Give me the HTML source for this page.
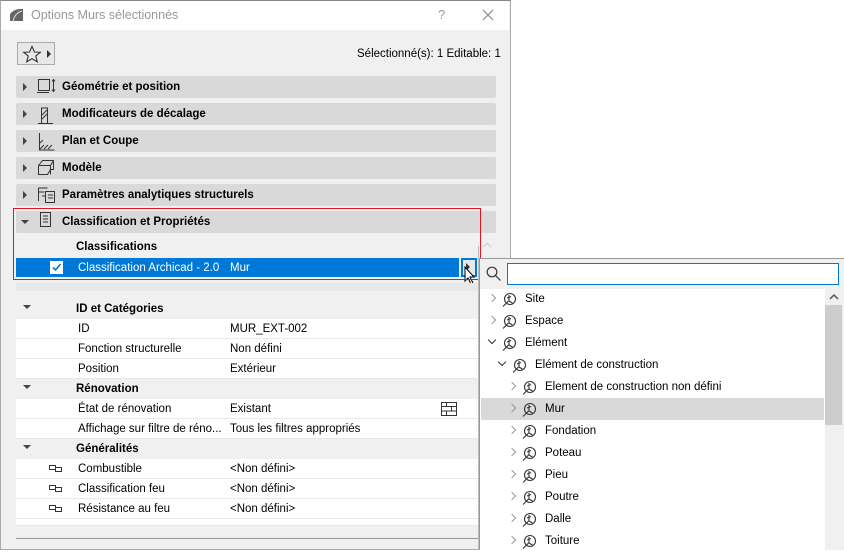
<!DOCTYPE html>
<html><head><meta charset="utf-8"><style>
*{box-sizing:border-box;margin:0;padding:0}
body{width:844px;height:550px;overflow:hidden;background:#fff;font-family:"Liberation Sans",sans-serif;font-size:11.5px;color:#000;position:relative}
.a{position:absolute}
.dlg{left:0;top:0;width:511px;height:550px;background:#f0f0f0;border:1px solid #aaa;border-top:1px solid #888}
.title{left:1px;top:1px;width:508px;height:29px;background:#fff}
.hdr{left:16px;width:480px;height:22px;background:#d9d9d9;border-radius:2px;font-weight:bold}
.hdr span{position:absolute;left:46px;top:5px}
.tri{position:absolute;left:7px;top:7px;width:0;height:0;border-top:4px solid transparent;border-bottom:4px solid transparent;border-left:4px solid #444}
.trid{position:absolute;width:0;height:0;border-left:4px solid transparent;border-right:4px solid transparent;border-top:4px solid #444}
.row{left:16px;width:462px;height:20px;background:#fff;border-bottom:1px solid #e8e8e8}
.grp{left:16px;width:462px;height:20px;background:#f0f0f0;font-weight:bold}
.row span,.grp span{position:absolute;top:4px}
.it{left:481px;width:343px;height:22px}
.it span{position:absolute;top:5px;font-size:11.5px}
.ch{position:absolute;top:7px;width:6px;height:6px;border-right:1.5px solid #999;border-bottom:1.5px solid #999;transform:rotate(-45deg)}
.chd{position:absolute;top:5px;width:6px;height:6px;border-right:1.5px solid #333;border-bottom:1.5px solid #333;transform:rotate(45deg)}
</style></head><body>
<div class="a dlg"></div>
<div class="a title"></div>
<svg class="a" style="left:9px;top:8px" width="15" height="14"><path d="M1 13 L1 6 Q6 0 14 1 L14 13 Z" fill="#666"/><path d="M4 13 Q6 5 13 3" stroke="#ddd" fill="none"/></svg>
<div class="a" style="left:31px;top:8px;font-size:12.5px;color:#999">Options Murs sélectionnés</div>
<div class="a" style="left:438px;top:7px;font-size:13px;color:#999">?</div>
<svg class="a" style="left:482px;top:9px" width="12" height="12"><path d="M1 1L11 11M11 1L1 11" stroke="#888" stroke-width="1.2"/></svg>
<div class="a" style="left:17px;top:42px;width:38px;height:23px;border:1px solid #aaa;background:#e8e8e8"></div>
<svg class="a" style="left:22px;top:45px" width="20" height="18"><path d="M10 1.5 L12.4 7 L18.3 7.3 L13.8 11 L15.3 16.8 L10 13.6 L4.7 16.8 L6.2 11 L1.7 7.3 L7.6 7 Z" fill="none" stroke="#333" stroke-width="1.1"/></svg>
<div class="a" style="left:47px;top:50px;border-top:4px solid transparent;border-bottom:4px solid transparent;border-left:4px solid #333"></div>
<div class="a" style="left:357px;top:48px">Sélectionné(s): 1 Editable: 1</div>

<div class="a hdr" style="top:76px"><div class="tri"></div><span>Géométrie et position</span></div>
<div class="a hdr" style="top:103px"><div class="tri"></div><span>Modificateurs de décalage</span></div>
<div class="a hdr" style="top:130px"><div class="tri"></div><span>Plan et Coupe</span></div>
<div class="a hdr" style="top:157px"><div class="tri"></div><span>Modèle</span></div>
<div class="a hdr" style="top:184px"><div class="tri"></div><span>Paramètres analytiques structurels</span></div>
<div class="a hdr" style="top:211px"><div class="trid" style="left:5px;top:9px"></div><span>Classification et Propriétés</span></div>
<svg class="a" style="left:36px;top:77px" width="20" height="160" fill="none" stroke="#333" stroke-width="1">
<rect x="2.5" y="2.5" width="11" height="11"/><path d="M1 15.5h12M17.5 3v11M16 4.5l1.5-2 1.5 2M16 12.5l1.5 2 1.5-2"/>
<path d="M2 46.5h15M5.5 46V31h6v15M6 42l5-5M6 38l5-5"/>
<path d="M3.5 56v17h15M4 72l4-4M8 72l4-4M12 72l4-4M4 66l3-3"/>
<path d="M2.5 88.5l4-5h11v9h-3l-3 5h-9zM2.5 88.5h12v9M14.5 88.5l3-5"/>
<path d="M2.5 124v-13h9M2.5 115h6M6 119h4M9.5 114.5h9v11h-9zM12 118h5M12 121h5"/>
<rect x="4.5" y="135.5" width="10" height="14"/><path d="M7 139h5M7 142h5M7 145h5"/>
</svg>
<div class="a" style="left:76px;top:241px;font-weight:bold">Classifications</div>
<svg class="a" style="left:482px;top:241px" width="10" height="8"><path d="M1 6l4-4 4 4" stroke="#ccc" fill="none"/></svg>
<div class="a" style="left:16px;top:258px;width:443px;height:19px;background:#0078d7"></div>
<div class="a" style="left:50px;top:261px;width:13px;height:13px;background:#fff;border:1px solid #fff"></div>
<svg class="a" style="left:51px;top:262px" width="11" height="11"><path d="M2 5.5l2.5 2.5 5-6" stroke="#0078d7" stroke-width="1.6" fill="none"/></svg>
<div class="a" style="left:78px;top:262px;color:#fff">Classification Archicad - 2.0</div>
<div class="a" style="left:230px;top:262px;color:#fff">Mur</div>
<div class="a" style="left:461px;top:258px;width:16px;height:19px;border:2px solid #0078d7;background:#e8e8e8"></div>
<div class="a" style="left:466px;top:263px;border-top:4px solid transparent;border-bottom:4px solid transparent;border-left:4px solid #333"></div>
<svg class="a" style="left:464px;top:266px" width="14" height="20"><path d="M1 1v14l3-3 3 6 2-1-3-6h4z" fill="#fff" stroke="#000"/></svg>
<div class="a" style="left:13px;top:208px;width:468px;height:72px;border:1.5px solid #e8141e"></div>
<div class="a" style="left:16px;top:283px;width:462px;height:8px;background:#e8e8e8"></div>

<div class="a grp" style="top:299px"><div class="trid" style="left:7px;top:6px"></div><span style="left:60px">ID et Catégories</span></div>
<div class="a row" style="top:319px"><span style="left:62px">ID</span><span style="left:214px">MUR_EXT-002</span></div>
<div class="a row" style="top:339px"><span style="left:62px">Fonction structurelle</span><span style="left:214px">Non défini</span></div>
<div class="a row" style="top:359px"><span style="left:62px">Position</span><span style="left:214px">Extérieur</span></div>
<div class="a grp" style="top:379px"><div class="trid" style="left:7px;top:6px"></div><span style="left:60px">Rénovation</span></div>
<div class="a row" style="top:399px"><span style="left:62px">État de rénovation</span><span style="left:214px">Existant</span></div>
<svg class="a" style="left:441px;top:402px" width="16" height="14" fill="none" stroke="#333"><path d="M.5 .5h15v13H.5zM.5 4.5h15M.5 9h15M5.5.5v4M10.5 4.5v4.5M5.5 9v4.5"/></svg>
<div class="a row" style="top:419px"><span style="left:62px">Affichage sur filtre de réno...</span><span style="left:214px">Tous les filtres appropriés</span></div>
<div class="a grp" style="top:439px"><div class="trid" style="left:7px;top:6px"></div><span style="left:60px">Généralités</span></div>
<div class="a row" style="top:459px"><span style="left:62px">Combustible</span><span style="left:214px">&lt;Non défini&gt;</span></div>
<div class="a row" style="top:479px"><span style="left:62px">Classification feu</span><span style="left:214px">&lt;Non défini&gt;</span></div>
<div class="a row" style="top:499px"><span style="left:62px">Résistance au feu</span><span style="left:214px">&lt;Non défini&gt;</span></div>
<div class="a row" style="top:519px;height:7px;overflow:hidden"></div>
<svg class="a" style="left:48px;top:464px" width="16" height="50" fill="none" stroke="#333"><path d="M1.5 1.5h6v4h-6zM7.5 3.5h6v4h-6z"/><path d="M1.5 21.5h6v4h-6zM7.5 23.5h6v4h-6z"/><path d="M1.5 41.5h6v4h-6zM7.5 43.5h6v4h-6z"/></svg>
<div class="a" style="left:16px;top:538px;width:462px;height:1px;background:#999"></div>
<div class="a" style="left:478px;top:246px;width:1px;height:304px;background:#bbb"></div>

<div class="a" style="left:479px;top:258px;width:365px;height:292px;background:#fff;border:1px solid #999;border-right:none;border-bottom:none"></div>
<div class="a" style="left:480px;top:259px;width:364px;height:30px;background:#f0f0f0"></div>
<svg class="a" style="left:486px;top:266px" width="16" height="16" fill="none" stroke="#333" stroke-width="1.2"><circle cx="6" cy="6" r="4.8"/><path d="M9.5 9.5l5 5"/></svg>
<div class="a" style="left:507px;top:263px;width:332px;height:22px;border:1px solid #0078d7;background:#fff"></div>
<div class="a" style="left:825px;top:289px;width:19px;height:261px;background:#f0f0f0"></div>
<svg class="a" style="left:829px;top:293px" width="10" height="8"><path d="M1 6l4-4 4 4" stroke="#555" stroke-width="1.5" fill="none"/></svg>
<div class="a" style="left:825px;top:305px;width:17px;height:120px;background:#cdcdcd"></div>
<div class="a" style="left:481px;top:398px;width:343px;height:22px;background:#d9d9d9"></div>

<div class="a it" style="top:288px"><div class="ch" style="left:8px"></div><span style="left:44px">Site</span></div>
<div class="a it" style="top:310px"><div class="ch" style="left:8px"></div><span style="left:44px">Espace</span></div>
<div class="a it" style="top:332px"><div class="chd" style="left:8px"></div><span style="left:44px">Elément</span></div>
<div class="a it" style="top:354px"><div class="chd" style="left:18px"></div><span style="left:54px">Elément de construction</span></div>
<div class="a it" style="top:376px"><div class="ch" style="left:28px"></div><span style="left:64px">Element de construction non défini</span></div>
<div class="a it" style="top:398px"><div class="ch" style="left:28px"></div><span style="left:64px">Mur</span></div>
<div class="a it" style="top:420px"><div class="ch" style="left:28px"></div><span style="left:64px">Fondation</span></div>
<div class="a it" style="top:442px"><div class="ch" style="left:28px"></div><span style="left:64px">Poteau</span></div>
<div class="a it" style="top:464px"><div class="ch" style="left:28px"></div><span style="left:64px">Pieu</span></div>
<div class="a it" style="top:486px"><div class="ch" style="left:28px"></div><span style="left:64px">Poutre</span></div>
<div class="a it" style="top:508px"><div class="ch" style="left:28px"></div><span style="left:64px">Dalle</span></div>
<div class="a it" style="top:530px"><div class="ch" style="left:28px"></div><span style="left:64px">Toiture</span></div>
<svg class="a" style="left:500px;top:291px" width="50" height="259" fill="none" stroke="#333" stroke-width="1.1">
<defs><g id="k"><circle cx="8" cy="7" r="5.5"/><path d="M1 14.5l5.5-5.5M7 3v6l3.5 2M5 6l4-1.5"/></g></defs>
<use href="#k" x="2" y="1"/><use href="#k" x="2" y="23"/><use href="#k" x="2" y="45"/><use href="#k" x="12" y="67"/>
<use href="#k" x="22" y="89"/><use href="#k" x="22" y="111"/><use href="#k" x="22" y="133"/><use href="#k" x="22" y="155"/><use href="#k" x="22" y="177"/><use href="#k" x="22" y="199"/><use href="#k" x="22" y="221"/><use href="#k" x="22" y="243"/>
</svg>
</body></html>
